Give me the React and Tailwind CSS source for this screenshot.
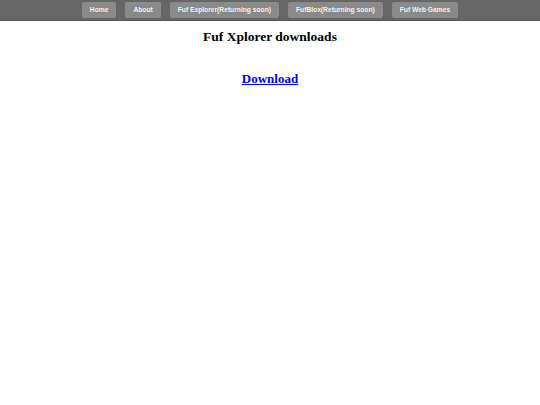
import React from "react";

const links = [
  "Home",
  "About",
  "Fuf Explorer(Returning soon)",
  "FufBlox(Returning soon)",
  "Fuf Web Games",
];

export default function App() {
  return (
    <div className="min-h-[405px] bg-white font-['Liberation_Serif',serif]">
      <nav className="flex h-[21px] items-center justify-center gap-[9px] bg-[#666666] border-b border-[#555555]">
        {links.map((l) => (
          <a
            key={l}
            href="#"
            className="flex h-[16px] items-center rounded-[2px] bg-[#8a8a8a] px-[8px] font-['Liberation_Sans',sans-serif] text-[6.7px] font-bold text-[#f2f2f2]"
          >
            {l}
          </a>
        ))}
      </nav>
      <h1 className="mt-[8px] text-center text-[13.5px] font-bold leading-[16px] text-black">
        Fuf Xplorer downloads
      </h1>
      <div className="mt-[25px] text-center leading-[16px]">
        <a href="#" className="text-[13px] font-bold text-[#0000ee] underline">
          Download
        </a>
      </div>
    </div>
  );
}
